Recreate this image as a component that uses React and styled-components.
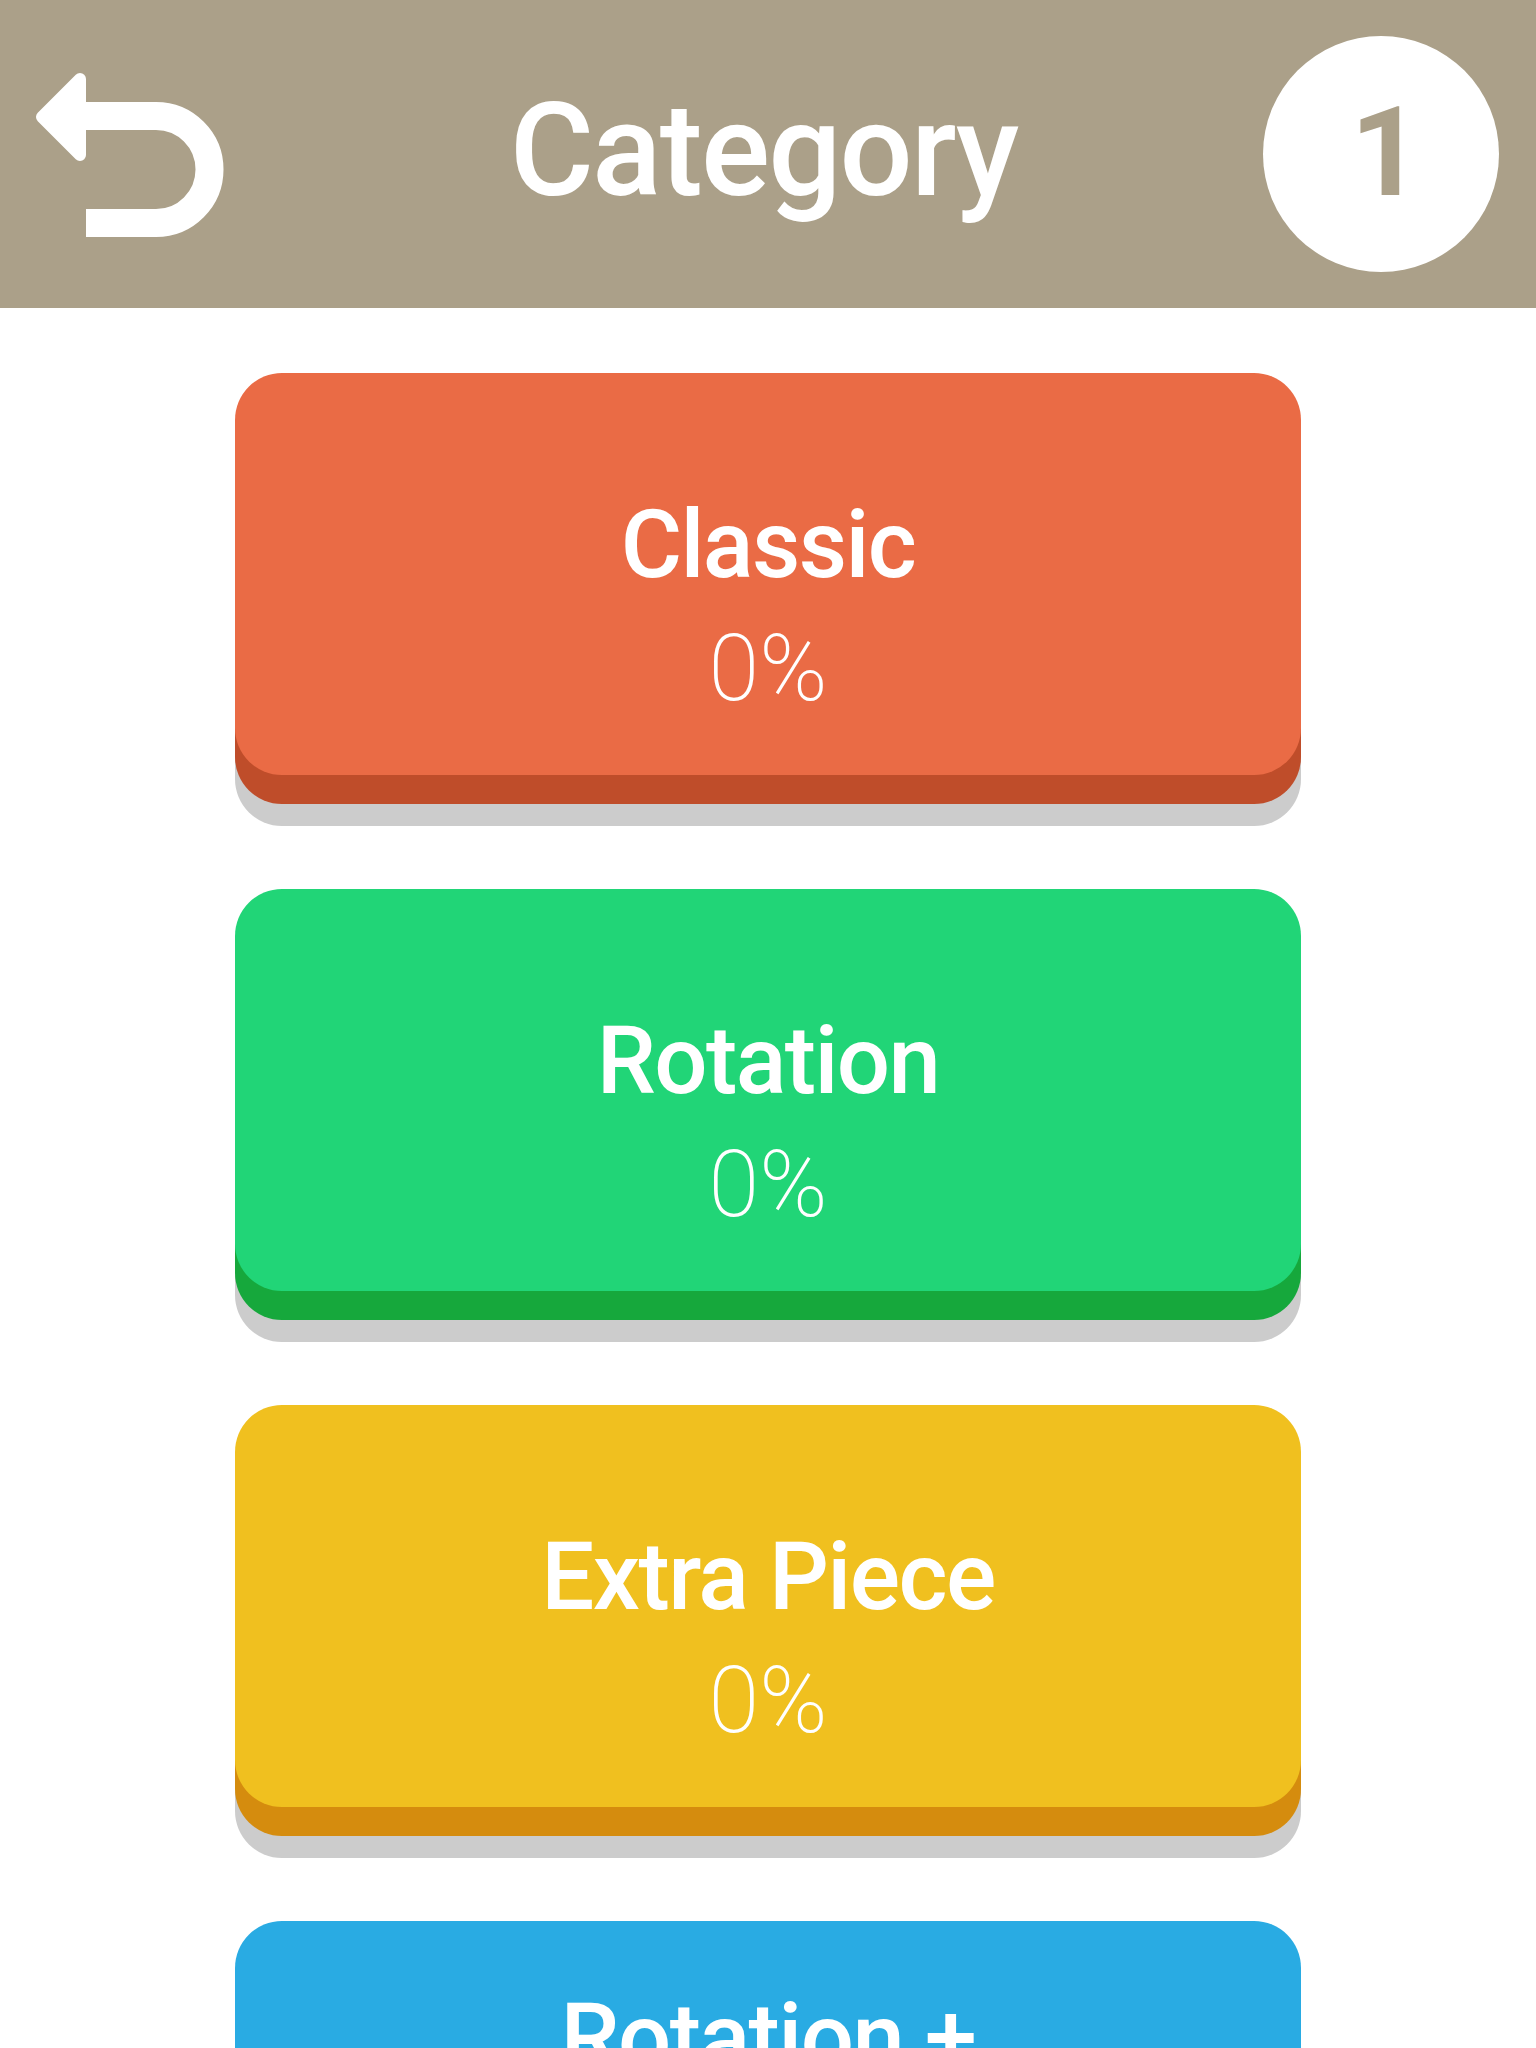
import styled, { createGlobalStyle } from "styled-components";

const GlobalStyle = createGlobalStyle`
  html, body {
    margin: 0;
    padding: 0;
    background: #ffffff;
  }
  body {
    font-family: Roboto, "Liberation Sans", sans-serif;
  }
`;

const Page = styled.div`
  width: 1536px;
  min-height: 2048px;
  background: #ffffff;
  overflow: hidden;
`;

// Top bar with back arrow, title and level badge
const Header = styled.header`
  height: 308px;
  background: #aba089;
  display: flex;
  align-items: center;
  padding: 0 37px 0 30px;
  box-sizing: border-box;
`;

const BackButton = styled.button`
  width: 200px;
  height: 180px;
  padding: 0;
  border: none;
  background: none;
  cursor: pointer;
  display: flex;
  margin-top: 2px;
`;

const Title = styled.h1`
  flex: 1;
  margin: 0 0 8px 0;
  padding-left: 34px;
  text-align: center;
  color: #ffffff;
  font-family: Roboto, "Liberation Sans", sans-serif;
  font-weight: 500;
  font-size: 129px;
  letter-spacing: -1.8px;
  line-height: 1;
`;

const LevelBadge = styled.div`
  width: 236px;
  height: 236px;
  border-radius: 50%;
  background: #ffffff;
  color: #aba089;
  display: flex;
  align-items: center;
  justify-content: center;
  font-family: Roboto, "Liberation Sans", sans-serif;
  font-weight: 700;
  font-size: 125px;
  line-height: 1;
  padding: 0 0 4px 10px;
  box-sizing: border-box;
`;

const CardList = styled.main`
  display: flex;
  flex-direction: column;
  align-items: center;
  gap: 114px;
  padding: 65px 0 120px;
`;

// Chunky button: the face with a darker ledge and a grey drop under it
const CategoryCard = styled.button`
  width: 1066px;
  height: 402px;
  border: none;
  border-radius: 47px;
  background: ${(p) => p.$face};
  box-shadow: 0 29px 0 ${(p) => p.$ledge}, 0 51px 0 #cccccc;
  display: flex;
  flex-direction: column;
  align-items: center;
  justify-content: center;
  padding: 64px 0 0;
  box-sizing: border-box;
  cursor: pointer;
  color: #ffffff;
`;

const CardName = styled.span`
  max-width: 620px;
  font-family: Roboto, "Liberation Sans", sans-serif;
  font-weight: 500;
  font-size: 94px;
  letter-spacing: -1.6px;
  line-height: 110px;
  text-align: center;
`;

const CardProgress = styled.span`
  margin-top: 15px;
  font-family: Roboto, "Liberation Sans", sans-serif;
  font-weight: 200;
  font-size: 92px;
  line-height: 108px;
`;

const BackArrow = () => (
  <svg width="200" height="180" viewBox="0 0 200 180" fill="none">
    <polygon
      points="12,52 50,14 50,90"
      fill="#ffffff"
      stroke="#ffffff"
      strokeWidth="12"
      strokeLinejoin="round"
    />
    <path
      d="M48 51 H126 A53.5 53.5 0 0 1 126 158 H56"
      stroke="#ffffff"
      strokeWidth="28"
      strokeLinecap="butt"
    />
  </svg>
);

const categories = [
  { name: "Classic", progress: 0, face: "#ea6b45", ledge: "#bf4d2a" },
  { name: "Rotation", progress: 0, face: "#21d577", ledge: "#16a83c" },
  { name: "Extra Piece", progress: 0, face: "#f0c01f", ledge: "#d58c0e" },
  { name: "Rotation + Extra Piece", progress: 0, face: "#29abe3", ledge: "#1b82b5" },
];

const App = () => {
  return (
    <Page>
      <GlobalStyle />
      <Header>
        <BackButton aria-label="Back">
          <BackArrow />
        </BackButton>
        <Title>Category</Title>
        <LevelBadge>1</LevelBadge>
      </Header>
      <CardList>
        {categories.map((c) => (
          <CategoryCard key={c.name} $face={c.face} $ledge={c.ledge}>
            <CardName>{c.name}</CardName>
            <CardProgress>{c.progress}%</CardProgress>
          </CategoryCard>
        ))}
      </CardList>
    </Page>
  );
};

export default App;
